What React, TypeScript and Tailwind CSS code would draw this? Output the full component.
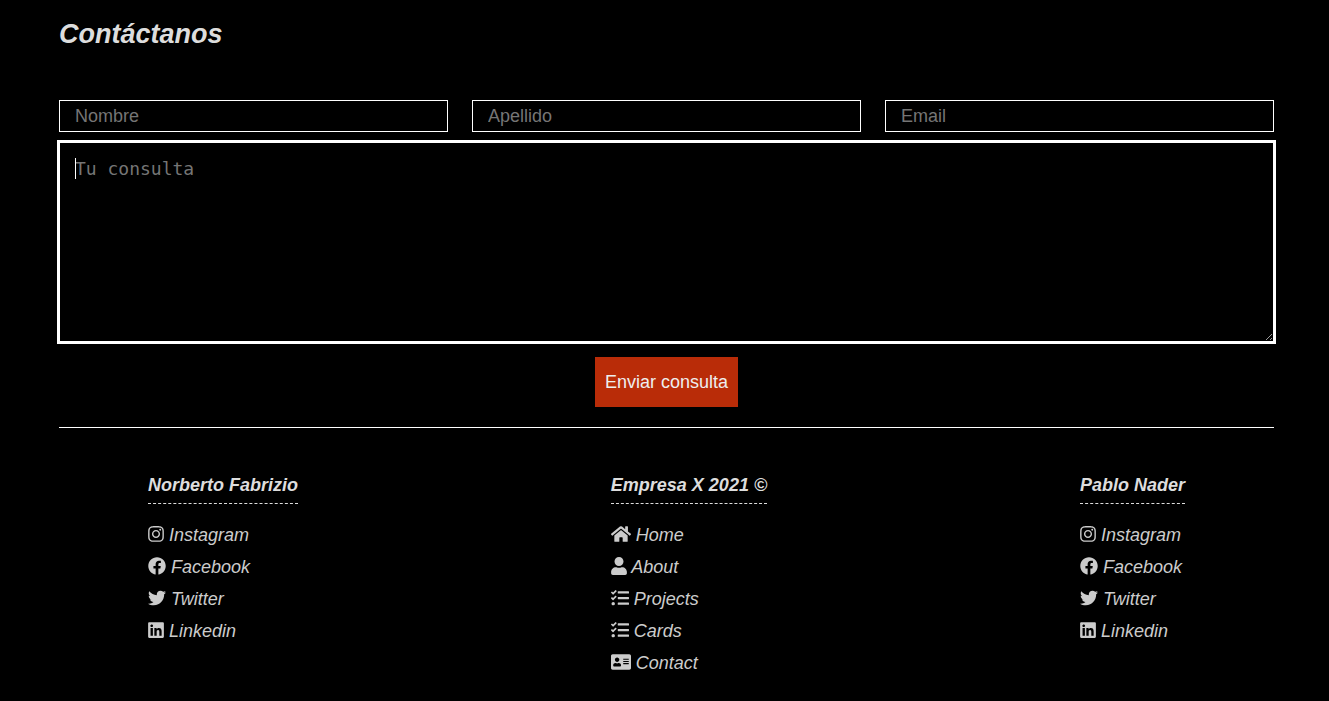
import type { IconType } from "react-icons";
import {
  FaAddressCard,
  FaFacebook,
  FaHome,
  FaInstagram,
  FaLinkedin,
  FaTasks,
  FaTwitter,
  FaUser,
} from "react-icons/fa";

type FooterLink = { label: string; icon: IconType; width: string };

const social: FooterLink[] = [
  { label: "Instagram", icon: FaInstagram, width: "w-4" },
  { label: "Facebook", icon: FaFacebook, width: "w-[18px]" },
  { label: "Twitter", icon: FaTwitter, width: "w-[18px]" },
  { label: "Linkedin", icon: FaLinkedin, width: "w-4" },
];

const columns: { title: string; links: FooterLink[] }[] = [
  { title: "Norberto Fabrizio", links: social },
  {
    title: "Empresa X 2021 ©",
    links: [
      { label: "Home", icon: FaHome, width: "w-5" },
      { label: "About", icon: FaUser, width: "w-4" },
      { label: "Projects", icon: FaTasks, width: "w-[18px]" },
      { label: "Cards", icon: FaTasks, width: "w-[18px]" },
      { label: "Contact", icon: FaAddressCard, width: "w-5" },
    ],
  },
  { title: "Pablo Nader", links: social },
];

const fields = [
  { name: "nombre", label: "Nombre", type: "text" },
  { name: "apellido", label: "Apellido", type: "text" },
  { name: "email", label: "Email", type: "email" },
];

function ContactForm() {
  return (
    <form className="flex flex-col" onSubmit={(e) => e.preventDefault()}>
      <div className="grid grid-cols-3 gap-6">
        {fields.map((f) => (
          <input
            key={f.name}
            type={f.type}
            name={f.name}
            aria-label={f.label}
            placeholder={f.label}
            className="h-8 w-full min-w-0 border border-white bg-black px-[15px] text-white placeholder:text-[#757575] focus:outline-2 focus:outline-white"
          />
        ))}
      </div>
      <div className="relative mt-[10px] flex">
        <textarea
          name="consulta"
          aria-label="Tu consulta"
          placeholder="Tu consulta"
          autoFocus
          className="peer h-[200px] w-full border border-white bg-black p-[15px] font-['DejaVu_Sans_Mono',monospace] leading-[21px] text-white placeholder:text-[#757575] focus:outline-2 focus:outline-white"
        />
        {/* Steady caret while the message is empty and focused */}
        <span
          aria-hidden="true"
          className="pointer-events-none absolute top-4 left-4 hidden h-[21px] w-px bg-white peer-focus:peer-placeholder-shown:block"
        />
      </div>
      <button
        type="submit"
        className="mt-[15px] h-[50px] cursor-pointer self-center bg-[#b92c08] px-[10px] text-[#eee]"
      >
        Enviar consulta
      </button>
    </form>
  );
}

function Footer() {
  return (
    <footer className="mt-5 flex justify-between border-t border-white px-[89px] pt-[45px] italic">
      {columns.map((col) => (
        <section key={col.title}>
          <h2 className="border-b border-dashed border-[#ddd] pb-[6px] leading-6 font-bold text-[#ddd]">
            {col.title}
          </h2>
          <ul className="mt-[15px]">
            {col.links.map(({ label, icon: Icon, width }) => (
              <li key={label} className="leading-8">
                <a href="#" className="text-[#ccc] hover:text-white">
                  <Icon className={`inline h-[18px] align-[-2px] ${width}`} aria-hidden="true" />{" "}
                  {label}
                </a>
              </li>
            ))}
          </ul>
        </section>
      ))}
    </footer>
  );
}

export default function App() {
  return (
    <main className="min-h-screen bg-black pt-4 pr-[55px] pb-5 pl-[59px] font-['Liberation_Sans',Arial,sans-serif] text-[18px]">
      <h1 className="mb-12 text-[27px] leading-9 font-bold text-[#ddd] italic">Contáctanos</h1>
      <ContactForm />
      <Footer />
    </main>
  );
}
